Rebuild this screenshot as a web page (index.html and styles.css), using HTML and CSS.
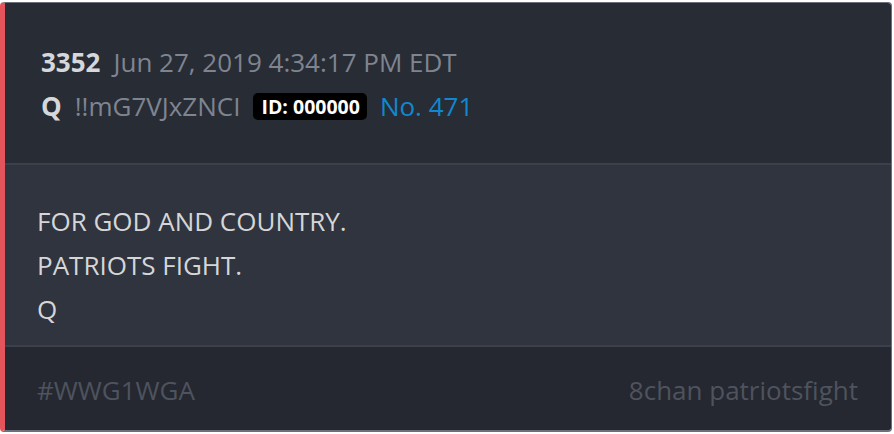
FILE: index.html
```html
<!DOCTYPE html>
<html lang="en">
<head>
    <meta charset="UTF-8">
    <title>Post 3352</title>
    <link rel="stylesheet" href="styles.css">
</head>
<body>
    <div class="post">
        <div class="post-header">
            <div class="row">
                <span class="post-num">3352</span>
                <span class="muted">Jun 27, 2019 4:34:17 PM EDT</span>
            </div>
            <div class="row">
                <span class="post-num">Q</span>
                <span class="muted">!!mG7VJxZNCI</span>
                <span class="badge">ID: 000000</span>
                <a class="link" href="#">No. 471</a>
            </div>
        </div>
        <div class="post-body">
            <p>FOR GOD AND COUNTRY.</p>
            <p>PATRIOTS FIGHT.</p>
            <p>Q</p>
        </div>
        <div class="post-footer">
            <span>#WWG1WGA</span>
            <span>8chan patriotsfight</span>
        </div>
    </div>
</body>
</html>
```

FILE: styles.css
```css
body {
    margin: 2px 2px 0 0;
    background-color: #ffffff;
    font-family: 'Open Sans', 'Liberation Sans', sans-serif;
    font-size: 26px;
}
.post {
    border: 1px solid #6b707b;
    border-left: 5px solid #e3555a;
    border-bottom-width: 2px;
    border-radius: 4px;
    overflow: hidden;
    height: 427px;
    display: flex;
    flex-direction: column;
}
.post-header {
    background-color: #282c34;
    padding: 37px 34px 35px 36px;
    border-bottom: 2px solid #3b404a;
}
.row {
    display: flex;
    align-items: center;
    height: 44px;
}
.post-num {
    color: #d6d7da;
    font-weight: bold;
    margin-right: 13px;
}
.muted {
    color: #7f8491;
    margin-right: 13px;
}
.badge {
    background-color: #000;
    color: #fff;
    font-weight: bold;
    font-size: 19.5px;
    line-height: 27px;
    padding: 0 7px 0 8px;
    border-radius: 5px;
    margin-right: 13px;
}
.link {
    color: #0f88d0;
    text-decoration: none;
}
.post-body {
    background-color: #2f343e;
    color: #d6d6d8;
    padding: 34px 31px 14px 32px;
    border-bottom: 2px solid #3b404a;
}
.post-body p {
    margin: 0;
    line-height: 44px;
}
.post-footer {
    flex: 1;
    background-color: #252830;
    color: #4e535e;
    display: flex;
    justify-content: space-between;
    align-items: center;
    padding: 3px 33px 0 32px;
    line-height: 44px;
}
```
